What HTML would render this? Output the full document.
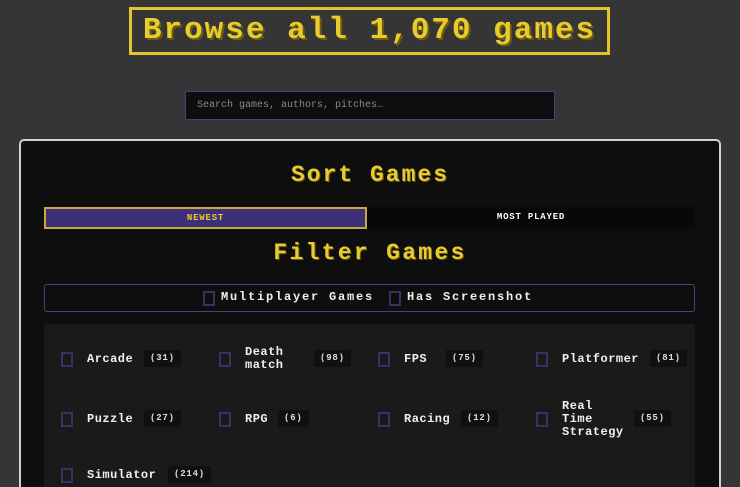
<!DOCTYPE html>
<html><head><style>
*{margin:0;padding:0;box-sizing:border-box}
html,body{width:740px;height:487px;overflow:hidden}
body{background:#353535;font-family:"Liberation Mono",monospace;position:relative}
.a{position:absolute}
.t{left:129px;top:7px;width:481px;height:48px;border:3px solid #e2c52c;color:#e8cb2e;font-weight:bold;font-size:31px;text-align:center;line-height:42px;letter-spacing:2px;text-shadow:2px 2px 0 #6b5a10}
.s{left:185px;top:91px;width:370px;height:29px;background:#0e0e10;border:1px solid #4b3f7c;border-radius:2px;color:#8a8a8a;font-size:10px;line-height:27px;padding-left:11px}
.p{left:19px;top:139px;width:702px;height:348px;background:#0e0e0e;border:2px solid #d0d0d0;border-bottom:none;border-radius:5px 5px 0 0}
.h{color:#e8cb2e;font-weight:bold;font-size:23px;text-align:center;width:740px;left:0;text-shadow:1px 1px 0 #6b5a10}
.b1{left:44px;top:207px;width:323px;height:22px;background:#3d2f78;border:2px solid #c9a93a;color:#e8cb2e;font-size:9px;font-weight:bold;text-align:center;line-height:18px;letter-spacing:0.8px}
.b2{left:367px;top:207px;width:328px;height:22px;background:#080808;color:#fff;font-size:9px;font-weight:bold;text-align:center;line-height:20px;letter-spacing:0.8px}
.f{left:44px;top:284px;width:651px;height:28px;border:1px solid #4b3f7c;border-radius:3px}
.cb{width:12px;height:15px;border:2px solid #3a3064;position:absolute}
.w{color:#f0f0f0;font-weight:bold;font-size:12px;position:absolute;letter-spacing:0.5px;line-height:13px}
.g{left:44px;top:324px;width:651px;height:170px;background:#1a1a1a;border-radius:3px}
.n{position:absolute;background:#101010;color:#ddd;font-size:9px;font-weight:bold;height:17px;line-height:17px;padding:0 6px;letter-spacing:0.8px}
</style></head><body>
<div class="a t">Browse all 1,070 games</div>
<div class="a s">Search games, authors, pitches…</div>
<div class="a p"></div>
<div class="a h" style="top:162px;letter-spacing:2px">Sort Games</div>
<div class="a b1">NEWEST</div>
<div class="a b2">MOST PLAYED</div>
<div class="a h" style="top:240px;letter-spacing:2.3px">Filter Games</div>
<div class="a f"></div>
<div class="cb" style="left:203px;top:291px"></div><div class="w" style="left:221px;top:291px;letter-spacing:1.8px">Multiplayer Games</div>
<div class="cb" style="left:389px;top:291px"></div><div class="w" style="left:407px;top:291px;letter-spacing:1.8px">Has Screenshot</div>
<div class="a g"></div>

<div class="cb" style="left:61px;top:352px"></div><div class="w" style="left:87px;top:353px">Arcade</div><div class="n" style="left:144px;top:350px">(31)</div>
<div class="cb" style="left:219px;top:352px"></div><div class="w" style="left:245px;top:346px">Death<br>match</div><div class="n" style="left:314px;top:350px">(98)</div>
<div class="cb" style="left:378px;top:352px"></div><div class="w" style="left:404px;top:353px">FPS</div><div class="n" style="left:446px;top:350px">(75)</div>
<div class="cb" style="left:536px;top:352px"></div><div class="w" style="left:562px;top:353px">Platformer</div><div class="n" style="left:650px;top:350px">(81)</div>

<div class="cb" style="left:61px;top:412px"></div><div class="w" style="left:87px;top:413px">Puzzle</div><div class="n" style="left:144px;top:410px">(27)</div>
<div class="cb" style="left:219px;top:412px"></div><div class="w" style="left:245px;top:413px">RPG</div><div class="n" style="left:278px;top:410px">(6)</div>
<div class="cb" style="left:378px;top:412px"></div><div class="w" style="left:404px;top:413px">Racing</div><div class="n" style="left:461px;top:410px">(12)</div>
<div class="cb" style="left:536px;top:412px"></div><div class="w" style="left:562px;top:400px">Real<br>Time<br>Strategy</div><div class="n" style="left:634px;top:410px">(55)</div>

<div class="cb" style="left:61px;top:468px"></div><div class="w" style="left:87px;top:469px">Simulator</div><div class="n" style="left:168px;top:466px">(214)</div>
</body></html>
